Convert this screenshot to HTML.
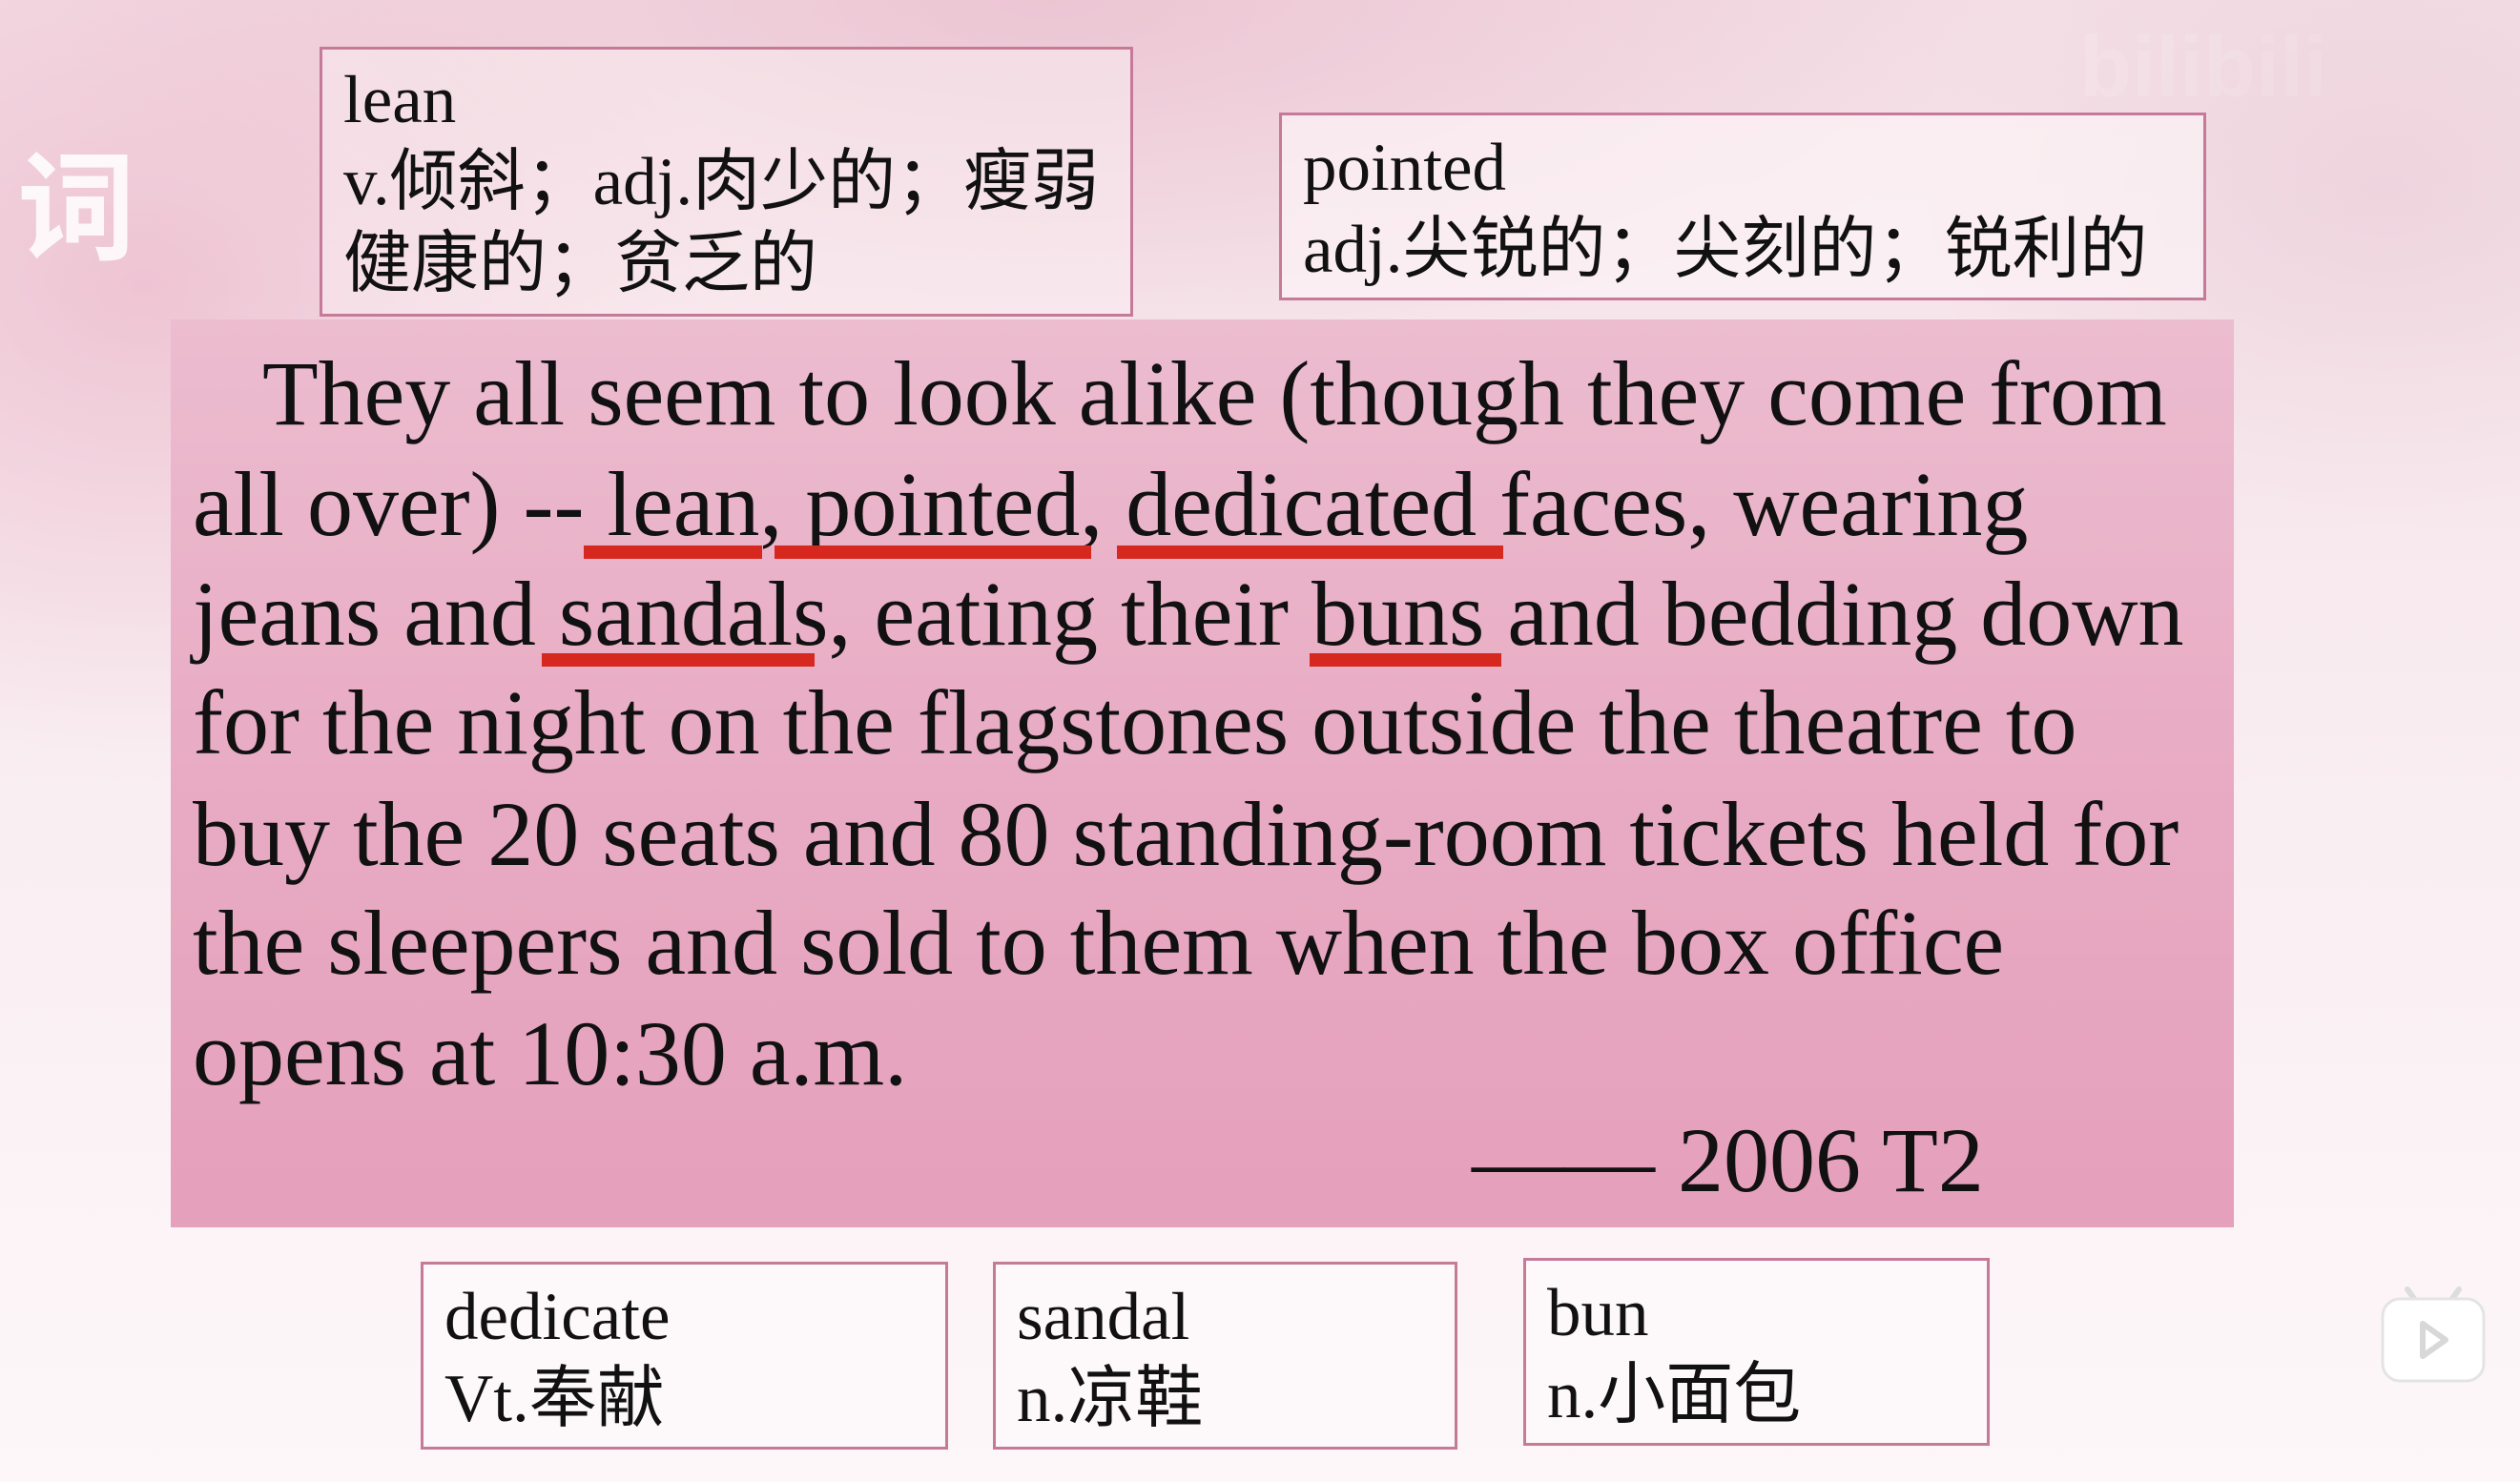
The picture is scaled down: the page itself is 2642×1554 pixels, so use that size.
<!DOCTYPE html>
<html><head><meta charset="utf-8"><style>
*{margin:0;padding:0;box-sizing:border-box}
html,body{width:2642px;height:1554px;overflow:hidden}
body{position:relative;font-family:"Liberation Serif","Noto Sans CJK SC",serif;color:#111;
background:
radial-gradient(ellipse 900px 700px at 150px 300px,rgba(232,170,192,.55),transparent 70%),
radial-gradient(ellipse 1400px 500px at 1100px 0px,rgba(230,180,198,.6),transparent 75%),
radial-gradient(ellipse 700px 500px at 2500px 200px,rgba(225,185,200,.35),transparent 70%),
linear-gradient(180deg,#f4dfe6 0%,#f9eef2 55%,#fdf7f9 100%);}
.box{position:absolute;border:3px solid #c57a98;font-size:71px;line-height:86px;padding-left:22px;white-space:nowrap}
.t{position:absolute;white-space:nowrap}
.main{position:absolute;left:179px;top:335px;width:2163px;height:952px;background:linear-gradient(180deg,#ecbccf 0%,#e8abc3 50%,#e5a0bb 100%)}
.ln{position:absolute;left:23px;font-size:96px;line-height:116px;white-space:nowrap}
.u{position:absolute;height:14px;background:#d6281f}
</style></head><body>
<div class="t" style="left:18px;top:118px;font-size:124px;font-weight:bold;color:rgba(255,255,255,.85);font-family:'Noto Sans CJK SC',sans-serif">词</div>
<div class="t" style="left:2180px;top:20px;font-size:90px;font-weight:bold;color:rgba(255,255,255,.12);font-family:'Liberation Sans',sans-serif">bilibili</div>

<div class="box" style="left:335px;top:49px;width:853px;height:283px;background:rgba(250,236,240,.55);padding-top:10px">lean<br>v.倾斜；adj.肉少的；瘦弱<br>健康的；贫乏的</div>
<div class="box" style="left:1341px;top:118px;width:972px;height:197px;background:rgba(252,244,247,.7);padding-top:12px">pointed<br>adj.尖锐的；尖刻的；锐利的</div>

<div class="main">
<div class="ln" style="top:20px;left:96px">They all seem to look alike (though they come from</div>
<div class="ln" style="top:136px">all over) -- lean, pointed, dedicated faces, wearing</div>
<div class="ln" style="top:251px">jeans and sandals, eating their buns and bedding down</div>
<div class="ln" style="top:365px">for the night on the flagstones outside the theatre to</div>
<div class="ln" style="top:482px">buy the 20 seats and 80 standing-room tickets held for</div>
<div class="ln" style="top:596px">the sleepers and sold to them when the box office</div>
<div class="ln" style="top:712px">opens at 10:30 a.m.</div>
<div class="ln" style="top:824px;left:1364px">—— 2006 T2</div>
<div class="u" style="left:433px;top:237px;width:187px"></div>
<div class="u" style="left:633px;top:237px;width:332px"></div>
<div class="u" style="left:992px;top:237px;width:405px"></div>
<div class="u" style="left:389px;top:350px;width:286px"></div>
<div class="u" style="left:1194px;top:350px;width:201px"></div>
</div>

<div class="box" style="left:441px;top:1323px;width:553px;height:197px;background:#fdf8fa;padding-top:12px">dedicate<br>Vt.奉献</div>
<div class="box" style="left:1041px;top:1323px;width:487px;height:197px;background:#fdf8fa;padding-top:12px">sandal<br>n.凉鞋</div>
<div class="box" style="left:1597px;top:1319px;width:489px;height:197px;background:#fdf8fa;padding-top:12px">bun<br>n.小面包</div>

<svg style="position:absolute;left:2494px;top:1336px" width="116" height="116" viewBox="0 0 116 116">
<path d="M30 16 L40 30 M84 16 L74 30" stroke="#ddd" stroke-width="6" stroke-linecap="round"/>
<rect x="4" y="26" width="106" height="86" rx="18" fill="#fff" stroke="#e4e4e4" stroke-width="3"/>
<path d="M46 52 L46 86 L70 69 Z" fill="#fff" stroke="#d8d8d8" stroke-width="6" stroke-linejoin="round"/>
</svg>
</body></html>
